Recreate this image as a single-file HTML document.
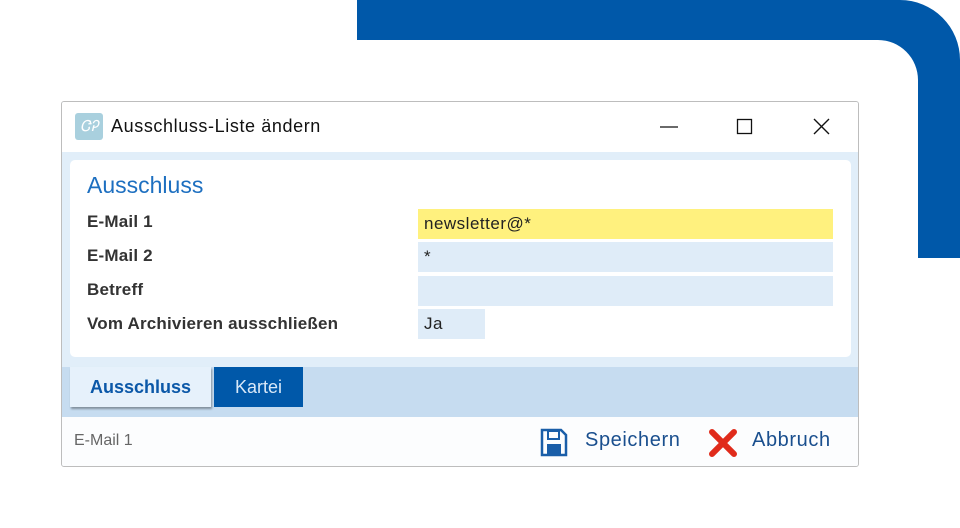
<!DOCTYPE html>
<html><head><meta charset="utf-8"><style>
*{margin:0;padding:0;box-sizing:border-box}
body{width:960px;height:528px;background:#fff;position:relative;overflow:hidden;font-family:"Liberation Sans",sans-serif}
.abs{position:absolute}
.lbl{position:absolute;left:87px;font-size:17px;font-weight:bold;color:#333;letter-spacing:0.2px}
.fld{position:absolute;left:418px;height:30px;background:#dfecf8;font-size:17px;color:#222;padding:5px 6px;letter-spacing:0.5px}
</style></head><body>
<svg class="abs" style="left:0;top:0" width="960" height="528">
<path d="M357 0 H900 A60 60 0 0 1 960 60 V258 H918 V80 A40 40 0 0 0 878 40 H357 Z" fill="#0058a9"/>
</svg>
<div class="abs" style="left:61px;top:101px;width:798px;height:366px;border:1px solid #bdbdbd;border-radius:3px;background:#e1eef9;overflow:hidden">
 <div class="abs" style="left:0;top:0;width:798px;height:50px;background:#fff"></div>
 <div class="abs" style="left:13px;top:11px;width:28px;height:27px;background:#a9d0de;border-radius:3px;color:#fff;font-size:15px;font-style:italic;text-align:center;line-height:27px">ᏣᎮ</div>
 <div class="abs" style="left:49px;top:14px;font-size:18px;color:#111;letter-spacing:0.6px">Ausschluss-Liste ändern</div>
 <svg class="abs" style="left:590px;top:12px" width="180" height="26">
  <line x1="8" y1="13" x2="26" y2="13" stroke="#111" stroke-width="1.3"/>
  <rect x="85.5" y="5.5" width="14" height="14" fill="none" stroke="#111" stroke-width="1.3"/>
  <path d="M162 5 L177 20 M177 5 L162 20" stroke="#111" stroke-width="1.4"/>
 </svg>
 <div class="abs" style="left:8px;top:58px;width:781px;height:197px;background:#fff;border-radius:5px"></div>
 <div class="abs" style="left:25px;top:70px;font-size:23px;color:#1d6fc0">Ausschluss</div>
 <div class="abs" style="left:0;top:265px;width:798px;height:50px;background:#c6dcf0"></div>
 <div class="abs" style="left:8px;top:265px;width:141px;height:40px;background:#e6f1fb;box-shadow:1px 2px 2px rgba(0,0,0,.35);color:#0b58a8;font-size:18px;font-weight:bold;text-align:center;line-height:40px">Ausschluss</div>
 <div class="abs" style="left:152px;top:265px;width:89px;height:40px;background:#0058a9;color:#d8e8f8;font-size:18px;text-align:center;line-height:40px">Kartei</div>
 <div class="abs" style="left:0;top:315px;width:798px;height:51px;background:#fcfdfe"></div>
 <div class="abs" style="left:12px;top:330px;font-size:16px;color:#666">E-Mail 1</div>
 <svg class="abs" style="left:478px;top:326px" width="30" height="30"><path d="M2 2 H21 L26 7 V27 H2 Z" fill="none" stroke="#1a5ea8" stroke-width="2.5"/><rect x="8" y="3" width="11" height="8" fill="none" stroke="#1a5ea8" stroke-width="2"/><rect x="7" y="16" width="14" height="10" fill="#1a5ea8"/></svg>
 <div class="abs" style="left:523px;top:327px;font-size:20px;color:#1a4f8e;letter-spacing:0.6px">Speichern</div>
 <svg class="abs" style="left:646px;top:326px" width="30" height="30"><path d="M4 4 L26 26 M26 4 L4 26" stroke="#e02b1b" stroke-width="6" stroke-linecap="round"/></svg>
 <div class="abs" style="left:690px;top:327px;font-size:20px;color:#1a4f8e;letter-spacing:0.6px">Abbruch</div>
</div>
<div class="lbl" style="top:212px">E-Mail 1</div>
<div class="lbl" style="top:246px">E-Mail 2</div>
<div class="lbl" style="top:280px">Betreff</div>
<div class="lbl" style="top:314px">Vom Archivieren ausschließen</div>
<div class="fld" style="top:209px;width:415px;background:#fff17e">newsletter@*</div>
<div class="fld" style="top:242px;width:415px">*</div>
<div class="fld" style="top:276px;width:415px"></div>
<div class="fld" style="top:309px;width:67px">Ja</div>
</body></html>
